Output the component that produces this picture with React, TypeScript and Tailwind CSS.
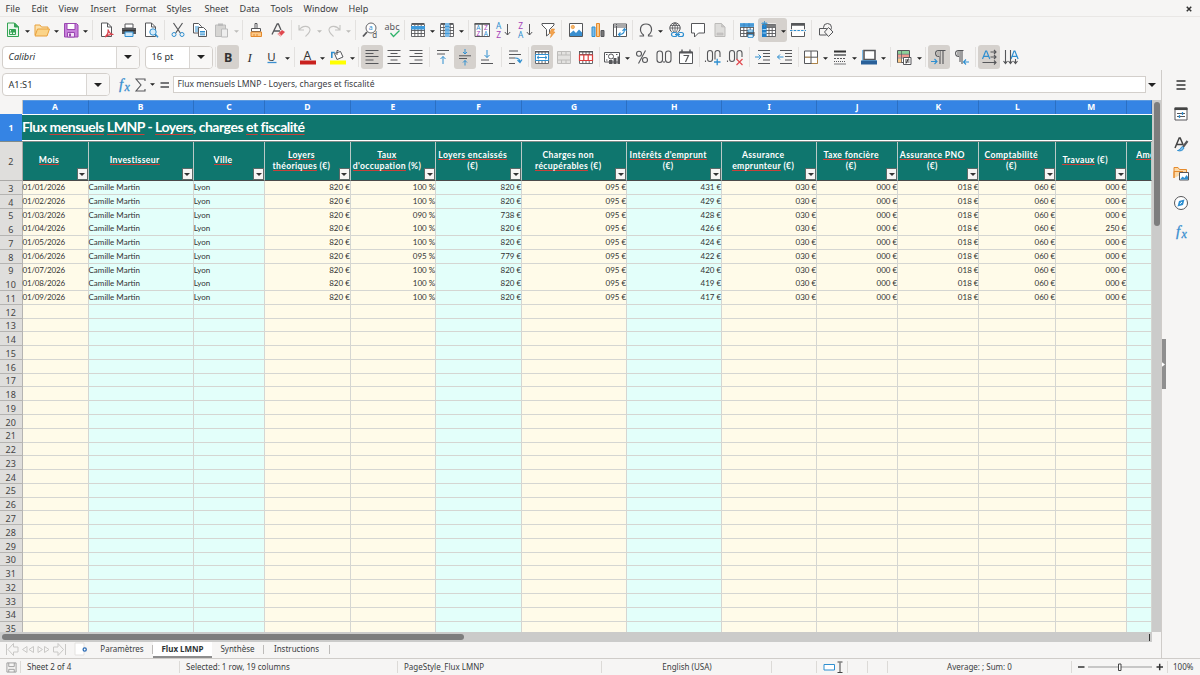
import React from 'react';

const BLUE = '#2f8fd0';
const INK = '#56575a';

const Grid: React.FC<{ color?: string }> = ({ color = INK }) => (
    <path d="M2.5 3.5h13v12h-13zM2.5 6.5h13M2.5 9.5h13M2.5 12.5h13M5.8 3.5v12M9 3.5v12M12.2 3.5v12" stroke={color} fill="none" strokeWidth=".9" />
);

const icons: Record<string, React.ReactNode> = {
    newDoc: <g>
        <path d="M3.500 2h7l4 4v9.500h-11z" fill="#e9f7ec" stroke="#35a455" />
        <path d="M10.500 2v4h4z" fill="#35a455" stroke="#35a455" />
        <path d="M5.500 8.500h6v5h-6zM5.500 11h6M8.500 8.500v5" fill="none" stroke="#35a455" />
        <path d="M7 8.500h4.500v2.500H7z" fill="#35a455" />
    </g>,
    open: <g>
        <path d="M2 14V4h5l1.500 2h6.500v3" fill="#fbe2ae" stroke="#e9a13c" />
        <path d="M2 15l2.500-7H16.500l-2.500 7z" fill="#fbd489" stroke="#e9a13c" />
    </g>,
    save: <g>
        <path d="M2.500 2.500h12l1.500 1.500v12H2.500z" fill="#c77fda" stroke="#9a47b0" />
        <path d="M5 2.500h8v6H5z" fill="#fff" stroke="#9a47b0" />
        <path d="M5.500 11.500h7V16h-7z" fill="#f4e2f8" stroke="#9a47b0" />
        <path d="M7 12.500h2v3H7z" fill="#9a47b0" />
    </g>,
    pdf: <g>
        <path d="M3.500 2h6l4 4v9.500h-10z" fill="#fff" stroke={INK} />
        <path d="M9.500 2v4h4" fill="none" stroke={INK} />
        <path d="M7 16c3-2.500 3.500-5 3-7.500 1 3 3 5 5.500 5-3-.5-6 .5-8.500 2.500z" fill="none" stroke="#d8434e" strokeWidth="1.200" />
    </g>,
    print: <g>
        <path d="M5 3h8v4H5z" fill="#fff" stroke={INK} />
        <path d="M2 7h14v6H2z" fill={INK} />
        <path d="M2.500 9.500h13" stroke="#333" />
        <path d="M5 11h8v4.500H5z" fill="#cfe7f8" stroke={BLUE} />
    </g>,
    preview: <g>
        <path d="M3.500 2h6l4 4v9.500h-10z" fill="#fff" stroke={INK} />
        <path d="M9.500 2v4h4" fill="none" stroke={INK} />
        <circle cx="11" cy="11" r="3.200" fill="#d8edfa" stroke={BLUE} />
        <path d="M13.300 13.300l2.700 3" stroke={BLUE} strokeWidth="1.500" />
    </g>,
    cut: <g fill="none">
        <path d="M4.500 2l6.800 10M13.500 2L6.700 12" stroke={INK} strokeWidth="1.200" />
        <circle cx="5" cy="13.500" r="2" stroke={BLUE} />
        <circle cx="13" cy="13.500" r="2" stroke={BLUE} />
    </g>,
    copy: <g fill="#fff">
        <path d="M2.500 2.500h5l3 3V12h-8z" stroke={INK} />
        <path d="M4 6h4M4 8h4M4 10h4" stroke={BLUE} />
        <path d="M7.500 6.500h5l3 3v6h-8z" stroke={INK} />
        <path d="M9 10.500h5M9 12h5M9 13.800h5" stroke={BLUE} />
    </g>,
    paste: <g>
        <path d="M2.500 4h10v11.500h-10z" fill="#d6d5d3" stroke="#bbb" />
        <path d="M5 2.500h5v2.500H5z" fill="#bbb" />
        <path d="M8.500 8h6v8h-6z" fill="#eee" stroke="#bbb" />
    </g>,
    brush: <g>
        <path d="M8 2.500h2v5H8z" fill="#fff" stroke={INK} />
        <path d="M4.500 7.500h9v3h-9z" fill="#fff" stroke={INK} />
        <path d="M4 11h10.500v4.500H4z" fill="#fbc98a" stroke="#e58a2c" />
        <path d="M7 13v2M10 13v2" stroke="#e58a2c" />
    </g>,
    clear: <g>
        <path d="M3 13.500L8.200 3h1.200l2.600 6M5 10h6" fill="none" stroke={INK} strokeWidth="1.300" />
        <path d="M8.500 13l4.500-4 3 2-4.500 4.500z" fill="#e0484f" />
        <path d="M8.500 13l1.500-1 2.500 2.500-1 1z" fill="#f6b6b8" />
    </g>,
    undo: <path d="M3 4v5h5M3.300 8.800C6 4.500 13 4 14 8.500c.3 2.500-1.500 4-4.500 7" fill="none" stroke="#c4c3c1" strokeWidth="1.100" />,
    redo: <path d="M15 4v5h-5M14.700 8.800C12 4.500 5 4 4 8.500c-.3 2.500 1.500 4 4.500 7" fill="none" stroke="#c4c3c1" strokeWidth="1.100" />,
    find: <g>
        <circle cx="10" cy="7" r="5" fill="#fff" stroke={INK} strokeWidth=".9" />
        <path d="M6 11l-4 4.500" stroke={INK} strokeWidth="1.800" />
        <text x="7.800" y="9.300" fontSize="7" fill={BLUE}>a</text>
        <text x="11.300" y="16.500" fontSize="8" fill={INK}>d</text>
    </g>,
    spell: <g>
        <text x="1.500" y="9" fontSize="9" fill={INK} textLength="15">abc</text>
        <path d="M7.500 12l3 3.500 6-6" fill="none" stroke="#2fb36a" strokeWidth="1.300" />
    </g>,
    row: <g><path d="M2 2h14v14H2z" fill="#fff" /><Grid /><path d="M2.500 2.500h13" stroke={INK} /><path d="M2 5h14v3.500H2z" fill="#3f9bdc" /></g>,
    col: <g><path d="M2 2h14v14H2z" fill="#fff" /><Grid /><path d="M2.500 2.500h13" stroke={INK} /><path d="M7 2h4.500v14H7z" fill="#7dbbe8" /><path d="M7 5.500h4.500M7 9h4.500M7 12.500h4.500" stroke="#3f9bdc" /></g>,
    sort: <g>
        <path d="M2 2.500h14.500v13H2zM9.200 2.500v13" fill="#fff" stroke={INK} />
        <path d="M1.500 3h15.500" stroke={INK} strokeWidth="1.500" />
        <g fontSize="6.500"><text x="3.300" y="9.300" fill={BLUE}>A</text><text x="3.500" y="15" fill="#a542b8">Z</text><text x="10.900" y="9.300" fill="#a542b8">Z</text><text x="10.700" y="15" fill={BLUE}>A</text></g>
    </g>,
    asc: <g fontSize="8.300">
        <text x="1" y="8" fill={BLUE}>A</text><text x="1.200" y="16.500" fill="#a542b8">Z</text>
        <path d="M12.500 3v11M9.800 11l2.700 3 2.700-3" fill="none" stroke={INK} />
    </g>,
    desc: <g fontSize="8.300">
        <text x="1.200" y="8" fill="#a542b8">Z</text><text x="1" y="16.500" fill={BLUE}>A</text>
        <path d="M12.500 3v11M9.800 11l2.700 3 2.700-3" fill="none" stroke={INK} />
    </g>,
    filter: <g>
        <path d="M3 2.500h12v1.500l-4.500 4.500v4l-3 2.500V8.500L3 4z" fill="#fff" stroke={INK} />
        <path d="M12.500 8h3l-1.500 3h2l-4.500 5.500 1-4h-2z" fill="#f3a34e" stroke="#e58a2c" strokeWidth=".6" />
    </g>,
    picture: <g>
        <path d="M2.500 2.500h13v13h-13z" fill="#fff" stroke={INK} />
        <circle cx="5.800" cy="6" r="1.700" fill="#f8b769" stroke="#e58a2c" strokeWidth=".6" />
        <path d="M3 15v-2.500l3.500-3 2.500 2.500 3-3.500L15 11.500V15z" fill="#3a8fd0" />
    </g>,
    chart: <g>
        <path d="M3 6h3v9.500H3z" fill="#7dbbe8" stroke={BLUE} />
        <path d="M7.500 2.500h3v13h-3z" fill="#fbc98a" stroke="#e58a2c" />
        <path d="M12 9.500h3v6h-3z" fill="#777" stroke={INK} />
    </g>,
    pivot: <g>
        <path d="M2.500 3h13v12.500h-13zM2.500 6h13M5.500 3v12.500" fill="#fff" stroke={INK} />
        <path d="M3 4.500h12" stroke="#aaa" />
        <path d="M8 13.500c4 0 5.500-2 5.500-5M11.500 9.800l2-2.300 2 2.300M9.500 11.500l-2 2 2 2" fill="none" stroke={BLUE} strokeWidth="1.100" />
    </g>,
    omega: <path d="M2.500 15h4v-1C1.500 10 3 3 9 3s7.500 7 2.500 11v1h4" fill="none" stroke={INK} strokeWidth="1.200" />,
    link: <g fill="none">
        <circle cx="8" cy="7" r="5.200" stroke={INK} />
        <path d="M2.800 7h10.400M3.500 4.500h9M8 1.800v10.400M8 1.800c-3.500 3-3.500 7 0 10.400M8 1.800c3.500 3 3.500 7 0 10.400" stroke={INK} strokeWidth=".8" />
        <path d="M4.500 11.500h12v5h-12z" fill="#f6f5f4" />
        <rect x="4.500" y="11.500" width="5.500" height="4" rx="2" stroke={BLUE} strokeWidth="1.200" />
        <rect x="11" y="11.500" width="5.500" height="4" rx="2" stroke={BLUE} strokeWidth="1.200" />
        <path d="M8 13.500h5" stroke={BLUE} />
    </g>,
    comment: <path d="M2.500 2.500h13v9.500H9.500l-4 4V12h-3z" fill="#fff" stroke={INK} />,
    headers: <g>
        <path d="M4 2.500h6.500l3.500 3.500v9.500H4z" fill="#dedddb" stroke="#bcbbb9" />
        <path d="M10.500 2.500V6H14M6 12h6v2H6z" fill="#c8c7c5" stroke="#bcbbb9" strokeWidth=".6" />
    </g>,
    printArea: <g>
        <path d="M2 2h14v13H2z" fill="#fff" /><Grid /><path d="M2 2h14v4H2z" fill="#5aa9e2" /><path d="M2 4h14M6 2v4M11 2v4" stroke="#2b7bbd" strokeWidth=".7" />
        <path d="M8.500 11h8v4h-8z" fill={INK} /><path d="M10 9h5v2h-5zM10 13.500h5v3h-5z" fill="#d8edfa" stroke={BLUE} strokeWidth=".8" />
    </g>,
    freeze: <g>
        <path d="M2 2.500h14v13H2z" fill="#fff" /><Grid /><path d="M2 3.500h14v3H2z" fill="#7a7b7d" /><path d="M2 4h4.500v12H2z" fill="#1f7fc9" />
        <path d="M2.500 8.500h4M2.500 12h4" stroke="#9fd0f2" /><path d="M4.500 0v6M1.500 2.500h6M2.500 1l4 4M6.500 1l-4 4" stroke={BLUE} strokeWidth=".8" />
    </g>,
    split: <g>
        <path d="M2.500 2.500h13v13h-13z" fill="#fff" stroke={INK} />
        <path d="M2 3.500h14" stroke={INK} strokeWidth="2.500" />
        <path d="M0.500 9.500h17" stroke="#f6f5f4" strokeWidth="2.500" /><path d="M1 9.500h16" stroke={BLUE} strokeDasharray="2.500 1.200" />
    </g>,
    shapes: <g fill="#f6f5f4" stroke={INK}>
        <circle cx="10.500" cy="6.500" r="4" /><path d="M2.500 7.500h7v6.500h-7z" /><path d="M11.500 6.500l4.500 4.500-4.500 4.500L7.500 11z" />
    </g>,
    bold: <text x="5" y="13.500" fontSize="12.500" fontWeight="700" fill="#333">B</text>,
    italic: <text x="6.500" y="13.500" fontSize="13" fontStyle="italic" fontFamily="Liberation Serif, serif" fill="#333">I</text>,
    underline: <g><text x="4.300" y="12.500" fontSize="11.500" fill="#333">U</text><path d="M4.500 14.500h9" stroke="#3a8fd0" strokeWidth="1.300" /></g>,
    fontColor: <g><text x="4.500" y="11.500" fontSize="12" fill="#333">A</text><path d="M1 12.500h16v4H1z" fill="#c9211e" /></g>,
    fillColor: <g>
        <path d="M1 12.500h16v4H1z" fill="#ffff00" />
        <path d="M5.500 5.500l6-2 2.500 5.500-6 2.500z" fill="#fff" stroke={INK} /><path d="M8 7V2.500h1.500" fill="none" stroke={INK} />
        <path d="M2.800 10V4.500h3" fill="none" stroke={BLUE} strokeWidth="1.600" />
    </g>,
    left: <path d="M2.500 2.500h13M2.500 5.500h8M2.500 8.500h13M2.500 12h8M2.500 15.500h13" stroke={INK} />,
    center: <path d="M2.500 2.500h13M5.500 5.500h7M2.500 8.500h13M5.500 12h7M2.500 15.500h13" stroke={INK} />,
    right: <path d="M2.500 2.500h13M7.500 5.500h8M2.500 8.500h13M7.500 12h8M2.500 15.500h13" stroke={INK} />,
    top: <g fill="none"><path d="M3 2.500h12M3 6h8" stroke={INK} /><path d="M9 16V8.500M6.500 11L9 8.500l2.500 2.500" stroke={BLUE} /></g>,
    middle: <g fill="none"><path d="M3 7.800h12M3 10.500h8" stroke={INK} /><path d="M9 1v5M7 4l2 2 2-2M9 17.500v-5M7 14.500l2-2 2 2" stroke={BLUE} /></g>,
    bottom: <g fill="none"><path d="M3 12h8M3 15.500h12" stroke={INK} /><path d="M9 2v7.500M6.500 7L9 9.500 11.500 7" stroke={BLUE} /></g>,
    wrap: <g fill="none"><path d="M3 3h9M3 6.500h12M3 10h6M3 15.500h6" stroke={INK} /><path d="M9 10c3 0 5 .5 5 4M11.500 12l2.500 2.500 2-3" stroke={BLUE} strokeWidth="1.200" /></g>,
    merge: <g><path d="M2 2h14v14H2z" fill="#fff" /><Grid /><path d="M2 3h14v1.500H2z" fill={INK} /><path d="M2.500 6.500h13v6h-13z" fill="#fff" stroke={BLUE} /><path d="M4 9.500h10M6 7.800L4 9.500l2 1.700M12 7.800l2 1.700-2 1.700" fill="none" stroke={BLUE} /></g>,
    mergeOff: <g><path d="M2.500 3h13v12.500h-13z" fill="#e3e2e0" /><path d="M2.500 3.500h13v12h-13zM2.500 7h13M2.500 12h13M6.500 3v4M11 3v4M6.500 12v4M11 12v4" stroke="#bdbcba" fill="none" /></g>,
    unmerge: <g><path d="M2 2h14v14H2z" fill="#fff" /><Grid /><path d="M2 3h14v1.500H2z" fill={INK} /><path d="M2.500 7h13v5.500h-13zM6.800 7v5.500M11.200 7v5.500" fill="#fff" stroke="#dd3b3b" strokeWidth="1.200" /></g>,
    currency: <g>
        <path d="M1.500 4.500h15v9.500h-15z" fill="#fff" stroke={INK} /><circle cx="8" cy="8.500" r="2.500" fill="none" stroke={INK} /><path d="M3 6.500h1.500M13 6.500h1.500M3 12h1.500" stroke={INK} />
        <path d="M6 12h3.500v4H6zM10.500 10h3v6h-3zM14.500 8.500h2.500V16h-2.500z" fill={INK} />
    </g>,
    percent: <g fill="none" stroke={INK} strokeWidth="1.100"><circle cx="6" cy="5.700" r="2.500" /><circle cx="12" cy="12" r="2.500" /><path d="M12.500 2.500l-7 13" /></g>,
    number: <g fill="none" stroke={INK} strokeWidth="1.100"><rect x="2" y="3" width="5.500" height="11.500" rx="2.700" /><rect x="10.500" y="3" width="5.500" height="11.500" rx="2.700" /><path d="M9 13v2" /></g>,
    date: <g><path d="M2.500 4h13v11.500h-13z" fill="#fff" stroke={INK} /><path d="M2.500 4.500h13" stroke={INK} strokeWidth="2" /><path d="M5 1.500v3M13 1.500v3" stroke={INK} strokeWidth="1.400" /><path d="M6.500 7.500h5l-3 6.500" fill="none" stroke={INK} strokeWidth="1.200" /></g>,
    addDec: <g fill="none" stroke={INK} strokeWidth="1.100"><rect x="3.500" y="2.500" width="5" height="11" rx="2.500" /><path d="M11 11.500V5c0-3.300 5-3.300 5 0v4M1.500 12.500v1.500" /><path d="M10 14h6.500M13.200 10.800v6.500" stroke={BLUE} strokeWidth="1.300" /></g>,
    delDec: <g fill="none" stroke={INK} strokeWidth="1.100"><rect x="3.500" y="2.500" width="5" height="11" rx="2.500" /><path d="M11 11.500V5c0-3.300 5-3.300 5 0v4M1.500 12.500v1.500" /><path d="M10.500 11l6 6M16.500 11l-6 6" stroke="#e0484f" strokeWidth="1.200" /></g>,
    indent: <g fill="none"><path d="M4 2.500h12M9 5.500h7M9 8.500h7M9 12h7M4 15.500h12" stroke={INK} /><path d="M1 9h6M4.500 6.500L7 9l-2.500 2.500" stroke={BLUE} /></g>,
    outdent: <g fill="none"><path d="M4 2.500h12M9 5.500h7M9 8.500h7M9 12h7M4 15.500h12" stroke={INK} /><path d="M7.500 9h-6M4 6.500L1.500 9 4 11.500" stroke={BLUE} /></g>,
    borders: <g><path d="M2.500 3h13v12.500h-13zM9 3v12.500M2.500 9.200h13" fill="#fff" stroke={INK} /><path d="M3 9.200h5.500M9.500 15.500H15.500V9.500" fill="none" stroke="#e9a13c" strokeWidth=".6" /></g>,
    lineStyle: <path d="M3 3.500h12" stroke="#333" strokeWidth="2" />,
    lineColor: <g><path d="M4 2.500h11v9H4z" fill="#fff" stroke={INK} strokeWidth="1.600" /><path d="M2.500 2v10.500h14" fill="none" stroke="#7dbbe8" /><path d="M1 12.500h16v4H1z" fill="#2a6099" /></g>,
    cond: <g>
        <path d="M2.500 2.500h12v12h-12z" fill="#fff" stroke={INK} /><path d="M3 3h11v3H3z" fill="#8dd29b" /><path d="M3 6.500h11v3H3z" fill="#f29a8e" /><path d="M3 10.500h4v4H3z" fill="#fbc98a" /><path d="M3 6.300h11M3 10h11M6.500 3v12" stroke={INK} strokeWidth=".7" />
        <path d="M8.500 9.500h7.500v7H8.500z" fill="#fff" stroke={INK} /><path d="M10 12h4.500M10 14h4.500M13.500 10.500L11 15.500" stroke="#333" strokeWidth=".9" />
    </g>,
    ltr: <g fill="none"><path d="M15.500 2.500H8.500c-4 0-4 6 .5 6M10 2.500V16M13 2.500V16" stroke={INK} strokeWidth="1.100" /><path d="M7 3h3v5H7z" fill="#b9b6b2" /><path d="M1 13.500h6M4.500 11l2.500 2.500L4.500 16" stroke={BLUE} strokeWidth="1.100" /></g>,
    rtl: <g fill="none"><path d="M11.500 2.500H6.500c-4 0-4 6 .5 6M8 2.500V14M10 2.500V16" stroke={INK} strokeWidth="1.100" /><path d="M5 3h3v5H5z" fill="#aaa" /><path d="M17 14h-5.500M14 11.500L11.500 14l2.500 2.500" stroke={BLUE} strokeWidth="1.100" /></g>,
    textLtr: <g fill="none"><path d="M2.500 11L5.700 3h.9l3.200 8M3.500 8.300h5.200" stroke={BLUE} strokeWidth="1.200" /><path d="M10.500 4h5.500M10.500 9h5.500M2.500 14.500H16M14 2l2 2-2 2M14 7l2 2-2 2M14 12.500l2 2-2 2" stroke={INK} strokeWidth="1.100" /></g>,
    textTtb: <g fill="none"><path d="M9 11l3-8h.9l3.200 8M10 8.300h5.200" stroke={BLUE} strokeWidth="1.200" /><path d="M3.500 2v13M8.500 2v13M13.500 11v4M1.500 13l2 2.500 2-2.500M6.500 13l2 2.500 2-2.500M11.500 13l2 2.500 2-2.500" stroke={INK} strokeWidth="1.100" /></g>,
    fx: <g fill="#3a8fd0" stroke="#3a8fd0" strokeWidth=".3" fontFamily="Liberation Serif, serif" fontStyle="italic"><text x="4" y="13" fontSize="15">f</text><text x="9.500" y="15" fontSize="12">x</text></g>,
    sigma: <path d="M13 5V3H4l5 6-5 6h9v-2" fill="none" stroke={INK} strokeWidth="1.100" />,
    equals: <path d="M5.500 7h8.500M5.500 11h8.500" stroke="#4b4b4d" strokeWidth="1.500" />,
    menu: <path d="M4.500 5h9M4.500 9h9M4.500 13h9" stroke="#333" strokeWidth="1.500" />,
    props: <g fill="none"><path d="M3 3h12v12H3z" fill="#fff" stroke={INK} /><path d="M2.500 3.800h13" stroke="#444" strokeWidth="2.500" /><path d="M5 8.500h8M5 11.500h8" stroke={INK} /><path d="M10.500 7v3M7.500 10v3" stroke={BLUE} strokeWidth="1.300" /></g>,
    styles: <g fill="none"><path d="M3 13L7.200 3h1l3 7M4.500 9.500h6" stroke="#444" strokeWidth="1.500" /><path d="M15.500 6l-4.500 6" stroke={INK} strokeWidth="2.200" /><path d="M5.500 15.500c3 0 2.500-3 5-4l1.500 1.500c-1 2.500-3.500 3.500-6.500 2.500z" fill="#7dbbe8" stroke={BLUE} /></g>,
    gallery: <g><path d="M2 14V3.500h4L7.500 5.500h7V8" fill="#fbd9a8" stroke="#e58a2c" /><path d="M2 14V7.500h9" fill="none" stroke="#e58a2c" /><path d="M7.500 8.500h9v7.500h-9z" fill="#fff" stroke={INK} /><path d="M8 15.500l2.500-3 2 1.500 2-3 1.500 2v2.500z" fill="#2f8fd0" /></g>,
    compass: <g><circle cx="9" cy="9" r="6.500" fill="#fff" stroke={INK} /><path d="M12.500 5.500l-1.500 5.500-5.500 1.500L7 7z" fill="#2f8fd0" /><path d="M8 9.800L10 8" stroke="#fff" /></g>,
};

const Icon: React.FC<{ name: string }> = ({ name }) => (
    <svg viewBox="0 0 18 18" className="w-[18px] h-[18px] shrink-0 overflow-visible" fontFamily="Noto Sans, sans-serif">
        {icons[name]}
        {name === 'lineStyle' && (
            <g stroke={INK}>
                <path d="M3 7h12" strokeWidth="1.500" />
                <path d="M3 10.500h12" strokeDasharray="2 1" />
                <path d="M3 13.500h12" strokeDasharray="1 1" />
                <path d="M3 16h12" strokeWidth=".8" />
            </g>
        )}
    </svg>
);

const Caret: React.FC<{ muted?: boolean; big?: boolean }> = ({ muted, big }) => (
    <svg viewBox="0 0 8 4" className={big ? 'w-2 h-1' : 'w-[5px] h-[3px]'}>
        <path d="M0 0h8L4 4z" fill={muted ? '#bdbcba' : '#222'} />
    </svg>
);

const gapWidths: Record<string, string> = {
    '2': 'w-[2px]',
    '3': 'w-[3px]',
    '4': 'w-[4px]',
    '5': 'w-[5px]',
    '6': 'w-[6px]',
    '7': 'w-[7px]',
    '8': 'w-[8px]',
};

// "|n" separator, "vn" dropdown arrow, "wn" disabled arrow, "_n" blank, "*" pressed
const Tools: React.FC<{ items: string }> = ({ items }) => (
    <>
        {items.split(' ').map((item, i) => {
            const kind = item[0];
            const width = gapWidths[item[1]];
            if (kind === '|') return <div key={i} className={`${width} h-5 shrink-0 flex justify-center`}><div className="w-px h-full bg-[#e3e1df]" /></div>;
            if (width && kind === '_') return <div key={i} className={`${width} shrink-0`} />;
            if (width && (kind === 'v' || kind === 'w')) return <div key={i} className={`${width} shrink-0 flex justify-center pt-0.5`}><Caret muted={kind === 'w'} /></div>;
            const pressed = kind === '*';
            return (
                <div key={i} className={`w-[22px] h-6 shrink-0 flex items-center justify-center rounded-[3px] ${pressed ? 'bg-[#d5d1cd]' : ''}`}>
                    <Icon name={pressed ? item.slice(1) : item} />
                </div>
            );
        })}
    </>
);

const menus = [
    ['File', 'w-[26px]'], ['Edit', 'w-[27px]'], ['View', 'w-[32px]'], ['Insert', 'w-[35px]'],
    ['Format', 'w-[41px]'], ['Styles', 'w-[38px]'], ['Sheet', 'w-[35px]'], ['Data', 'w-[31px]'],
    ['Tools', 'w-[33px]'], ['Window', 'w-[45px]'], ['Help', 'w-[30px]'],
];

const Combo: React.FC<{ text: string; className: string; italic?: boolean }> = ({ text, className, italic }) => (
    <div className={`${className} h-[23px] shrink-0 flex rounded-[4px] border border-[#d3cfcb] bg-white overflow-hidden`}>
        <div className={`flex-1 flex items-center pl-[5.500px] text-[9.200px] text-[#2e3436] ${italic ? 'italic' : ''}`}>{text}</div>
        <div className="w-[23px] border-l border-[#d9d6d3] bg-[#f8f7f6] flex items-center justify-center"><Caret big /></div>
    </div>
);

interface Column {
    id: string;
    head: string[];
    calc?: boolean;
    plain?: number;
    values: string[];
}

const months = ['01', '02', '03', '04', '05', '06', '07', '08', '09'];
const repeat = (v: string) => months.map(() => v);

// plain = index of a header line that passes the spell checker
const columns: Column[] = [
    { id: 'A', head: ['Mois'], values: months.map(m => `01/${m}/2026`) },
    { id: 'B', head: ['Investisseur'], calc: true, values: repeat('Camille Martin') },
    { id: 'C', head: ['Ville'], calc: true, values: repeat('Lyon') },
    { id: 'D', head: ['Loyers', 'théoriques (€)'], values: repeat('820 €') },
    { id: 'E', head: ['Taux', "d'occupation (%)"], values: ['100 %', '100 %', '090 %', '100 %', '100 %', '095 %', '100 %', '100 %', '100 %'] },
    { id: 'F', head: ['Loyers encaissés', '(€)'], calc: true, values: ['820 €', '820 €', '738 €', '820 €', '820 €', '779 €', '820 €', '820 €', '820 €'] },
    { id: 'G', head: ['Charges non', 'récupérables (€)'], plain: 0, values: repeat('095 €') },
    { id: 'H', head: ["Intérêts d'emprunt", '(€)'], calc: true, values: ['431 €', '429 €', '428 €', '426 €', '424 €', '422 €', '420 €', '419 €', '417 €'] },
    { id: 'I', head: ['Assurance', 'emprunteur (€)'], plain: 0, values: repeat('030 €') },
    { id: 'J', head: ['Taxe foncière', '(€)'], values: repeat('000 €') },
    { id: 'K', head: ['Assurance PNO', '(€)'], values: repeat('018 €') },
    { id: 'L', head: ['Comptabilité', '(€)'], values: repeat('060 €') },
    { id: 'M', head: ['Travaux (€)'], values: ['000 €', '000 €', '000 €', '250 €', '000 €', '000 €', '000 €', '000 €', '000 €'] },
    { id: '', head: ['Amo', ''], calc: true, values: repeat('') },
];

const COLS = 'grid grid-cols-[22.5px_66px_105.3px_71.3px_85.7px_85.4px_86px_105px_95px_95px_81px_81.3px_76.7px_71px_24.8px]';
const rows = Array.from({ length: 33 }, (_, i) => i + 3);

const HeaderLine: React.FC<{ text: string; plain: boolean }> = ({ text, plain }) => {
    const [, word, unit] = text.match(/^(.*?)(\s?\([€%]\))?$/) || [];
    return (
        <div className="whitespace-pre h-[10.3px]">
            <span className={plain || !word ? '' : 'inline-block h-[10px] border-b border-[#c9403a]'}>{word}</span>{unit}
        </div>
    );
};

const Misspelt: React.FC<{ children: string }> = ({ children }) => (
    <span className="underline decoration-[#c9403a] decoration-1 underline-offset-2 [text-decoration-skip-ink:none]">{children}</span>
);

const Sheet: React.FC = () => (
    <div className="w-[1152px] h-[532px] overflow-hidden bg-[#f6f5f4]">
        <div className={`${COLS} h-[14px] text-[8.5px] font-bold text-white`}>
            <div className="border-r border-[#c4c3c1]" />
            {columns.map((c, i) => (
                <div key={i} className="bg-[#3584e4] border-r border-t border-r-[#2b6fc2] border-t-[#5c9ae0] flex items-center justify-center">{c.id}</div>
            ))}
        </div>
        <div className="h-[27px] flex">
            <div className="w-[22px] bg-[#3584e4] text-white text-[8.5px] font-bold flex items-center justify-center pt-px">1</div>
            <div className="flex-1 bg-[#0f766e] border-y border-white text-white font-[Lato] font-bold text-[14px] tracking-[-0.48px] flex items-center pb-[2px] whitespace-pre">
                <div>
                    Flux <Misspelt>mensuels</Misspelt> <Misspelt>LMNP</Misspelt> - <Misspelt>Loyers</Misspelt>, charges <Misspelt>et</Misspelt> <Misspelt>fiscalité</Misspelt>
                </div>
            </div>
        </div>
        <div className={`${COLS} h-[40px] border-t border-[#7f8a88]`}>
            <div className="bg-[#dfdedc] border-r border-b border-[#aaa9a7] text-[9px] text-[#444] flex items-center justify-center pt-px">2</div>
            {columns.map((c, i) => (
                <div key={i} className="relative bg-[#0f766e] border-r border-r-[#b9c9c6] border-b border-b-[#4b4b4b] overflow-hidden">
                    <div className={`h-full flex flex-col justify-center text-center text-white font-[Lato] font-bold text-[8.6px] tracking-[0.35px] leading-[10.3px] pb-px ${c.id ? '-ml-px pr-[11px]' : 'pl-[9px] text-left'}`}>
                        {c.head.map((line, j) => (line ? <HeaderLine key={j} text={line} plain={c.plain === j} /> : <div key={j} className="h-[10px]" />))}
                    </div>
                    {c.id && (
                        <div className="absolute right-0 bottom-0 w-[11px] h-[12px] bg-[#f6f5f4] border border-[#5c6a68] flex items-center justify-center">
                            <svg viewBox="0 0 8 4" className="w-[6px] h-[3px]"><path d="M0 0h8L4 4z" fill="#333" /></svg>
                        </div>
                    )}
                </div>
            ))}
        </div>
        {rows.map(r => (
            <div key={r} className={`${COLS} h-[13.77px]`}>
                <div className="bg-[#dfdedc] border-r border-b border-[#b5b4b2] text-[9px] text-[#444] flex items-center justify-center leading-none pt-[1.5px]">{r}</div>
                {columns.map((c, i) => (
                    <div
                        key={i}
                        className={`border-r border-b border-[#d5d6d2] font-[Lato] text-[8px] leading-[13px] text-[#333] whitespace-pre ${c.calc ? 'bg-[#e3fffa]' : 'bg-[#fffbe9]'} ${i === 0 ? 'tracking-[-0.2px]' : ''} ${i < 3 ? 'text-left' : 'text-right'}`}
                    >
                        {c.values[r - 3]}
                    </div>
                ))}
            </div>
        ))}
    </div>
);

const Divider: React.FC<{ className?: string }> = ({ className = 'h-3 bg-[#dcdad7]' }) => <div className={`w-px shrink-0 ${className}`} />;

const App: React.FC = () => (
    <div className="w-[1200px] h-[675px] overflow-hidden flex flex-col bg-[#f6f5f4] text-[#3a3d3f] font-['Noto_Sans',sans-serif] text-[8px]">
        <div className="h-[17px] shrink-0 flex items-center pl-[5.500px] pt-px text-[9.100px] border-b border-[#e9e7e5]">
            {menus.map(([label, width]) => <div key={label} className={width}>{label}</div>)}
            <svg viewBox="0 0 8 8" className="ml-auto mr-[8px] w-[6px] h-[6px]"><path d="M1 1l6 6M7 1L1 7" stroke="#333" strokeWidth="2" /></svg>
        </div>

        <div className="h-[27px] shrink-0 flex items-center pl-[1.500px] pb-px">
            <Tools items="newDoc v7 open v7 save v8 |6 pdf print preview |5 cut copy paste w7 |5 brush clear |5 undo w7 redo w8 |6 find spell |4 row v7 col v8 |5 sort asc desc filter |6 picture chart pivot |4 omega v8 link comment headers |5 printArea" />
            <div className="w-[29px] h-6 shrink-0 flex items-center rounded-[3px] bg-[#d5d1cd]">
                <Tools items="freeze v7" />
            </div>
            <Tools items="split |6 shapes" />
        </div>

        <div className="h-[26px] shrink-0 flex items-center pl-[2px]">
            <Combo text="Calibri" italic className="w-[138px]" />
            <div className="w-[5px] shrink-0" />
            <Combo text="16 pt" className="w-[68px]" />
            <Tools items="|4 *bold italic underline v8 |6 fontColor v6 _2 fillColor v6 |6 *left center right |5 top *middle bottom |6 wrap |5 *merge mergeOff unmerge |4 currency v8 percent number date |5 addDec delDec |6 indent outdent |4 borders v7 lineStyle v7 lineColor v7 |6 cond v8 |5 *ltr rtl |6 *textLtr textTtb" />
        </div>

        <div className="flex-1 min-h-0 flex">
            <div className="w-[1161px] shrink-0 flex flex-col">
                <div className="h-[30px] shrink-0 flex items-start pt-[3px]">
                    <div className="flex items-center h-[23px] w-full pl-[2px]">
                        <Combo text="A1:S1" className="w-[108px]" />
                        <div className="w-[5px] shrink-0" />
                        <div className="w-[17px] shrink-0 flex justify-center"><Icon name="fx" /></div>
                        <div className="w-[17px] shrink-0 flex justify-center"><Icon name="sigma" /></div>
                        <div className="w-[6px] shrink-0 flex justify-center"><Caret /></div>
                        <div className="w-[18px] shrink-0 flex justify-center"><Icon name="equals" /></div>
                        <div className="flex-1 h-[17px] bg-white border border-[#d3cfcb] flex items-center pl-[3.500px] text-[8.600px]">Flux mensuels LMNP - Loyers, charges et fiscalité</div>
                        <div className="w-[15px] flex justify-center pr-[3px]"><Caret big /></div>
                    </div>
                </div>
                <div className="flex h-[532px] shrink-0">
                    <Sheet />
                    <div className="w-[9px] bg-[#cbcbca] pt-[2px] flex justify-center items-start"><div className="w-[6px] h-[124px] rounded-full bg-[#7d7d7d]" /></div>
                </div>
                <div className="h-[10px] shrink-0 w-[1152px] bg-[#cbcbca] flex items-center justify-between pl-[2px] pr-[2px]">
                    <div className="w-[462px] h-[6px] rounded-full bg-[#7d7d7d]" />
                    <div className="w-px h-[7px] bg-[#333]" />
                </div>
                <div className="h-4 shrink-0 flex items-center pb-[2px]">
                    <svg viewBox="0 0 84 14" className="w-[84px] h-[14px] ml-[4px] shrink-0" fill="none" stroke="#c9c8c6">
                        <path d="M2.500 2v11M9.500 1.500L4 7.500l5.500 6V10H14V5H9.500zM23 4.500L18.500 7.500l4.500 3zM29.500 4.500L25 7.500l4.500 3zM34 4.500v6l4.500-3zM40.500 4.500v6l4.500-3zM54 1.500l5.500 6-5.500 6V10h-4.500V5H54zM61.500 2v11" />
                        <path d="M71 1h9v12h-9z" fill="#fff" stroke="#e4e2e0" />
                        <circle cx="80.700" cy="7.500" r="1.600" fill="#fff" stroke="#2a6bb5" strokeWidth="1.300" />
                    </svg>
                    <div className="w-[64px] text-center pl-[4px]">Paramètres</div>
                    <Divider className="h-[9px] bg-[#bdbbb9]" />
                    <div className="w-[59px] h-4 mt-[2px] text-center bg-white font-bold border-b-2 border-[#8d8d8d] leading-[14px] text-[#2e3436]">Flux LMNP</div>
                    <div className="w-[51px] text-center">Synthèse</div>
                    <Divider className="h-[9px] bg-[#bdbbb9]" />
                    <div className="w-[65px] text-center">Instructions</div>
                    <Divider className="h-[9px] bg-[#bdbbb9]" />
                </div>
            </div>
            <div className="flex-1 border-l border-[#cfccc9] flex">
                <div className="w-1 h-[50px] mt-[269px] bg-[#8f8f8f] flex items-center">
                    <svg viewBox="0 0 4 6" className="w-[3px] h-[5px]"><path d="M0 0l4 3-4 3z" fill="#fff" /></svg>
                </div>
                <div className="pl-[6px] pt-[6px] flex flex-col gap-[11.400px]">
                    {['menu', 'props', 'styles', 'gallery', 'compass', 'fx'].map(n => <Icon key={n} name={n} />)}
                </div>
            </div>
        </div>

        <div className="h-[17px] shrink-0 border-t border-[#cfccc9] flex items-center">
            <svg viewBox="0 0 12 12" className="w-[11px] h-[11px] ml-[6px] shrink-0" fill="none" stroke="#999"><path d="M1 1h10v10H1zM3 1v4h6V1M3 11V8h6v3" /></svg>
            <Divider className="ml-[3px] h-3 bg-[#dcdad7]" />
            <div className="w-[158px] pl-[6px]">Sheet 2 of 4</div>
            <Divider />
            <div className="w-[217px] pl-[6px]">Selected: 1 row, 19 columns</div>
            <Divider />
            <div className="w-[203px] pl-[6px]">PageStyle_Flux LMNP</div>
            <Divider />
            <div className="w-[169px] text-center pl-px">English (USA)</div>
            <Divider />
            <div className="w-[44px]" />
            <Divider />
            <svg viewBox="0 0 30 14" className="w-[30px] h-[14px] shrink-0" fill="none"><path d="M7 4.500h10.500v5.500H7z" fill="#fff" stroke={BLUE} /><path d="M23 2.500v9.500M20.500 2h5M20.500 12.500h5" stroke="#444" /></svg>
            <Divider />
            <div className="w-[19px]" />
            <Divider />
            <div className="w-[19px]" />
            <Divider />
            <div className="w-[183px] text-center">Average: ; Sum: 0</div>
            <Divider />
            <svg viewBox="0 0 95 14" className="w-[95px] h-[14px] shrink-0" fill="none">
                <path d="M6 7h6.500M84.500 7h6.500M87.700 3.800v6.500" stroke="#333" strokeWidth="1.500" />
                <path d="M16 7h64" stroke="#999" /><path d="M46.500 4h2.500v6.500h-2.500z" fill="#fff" stroke="#444" />
            </svg>
            <Divider />
            <div className="pl-[5px]">100%</div>
        </div>
    </div>
);

export default App;
